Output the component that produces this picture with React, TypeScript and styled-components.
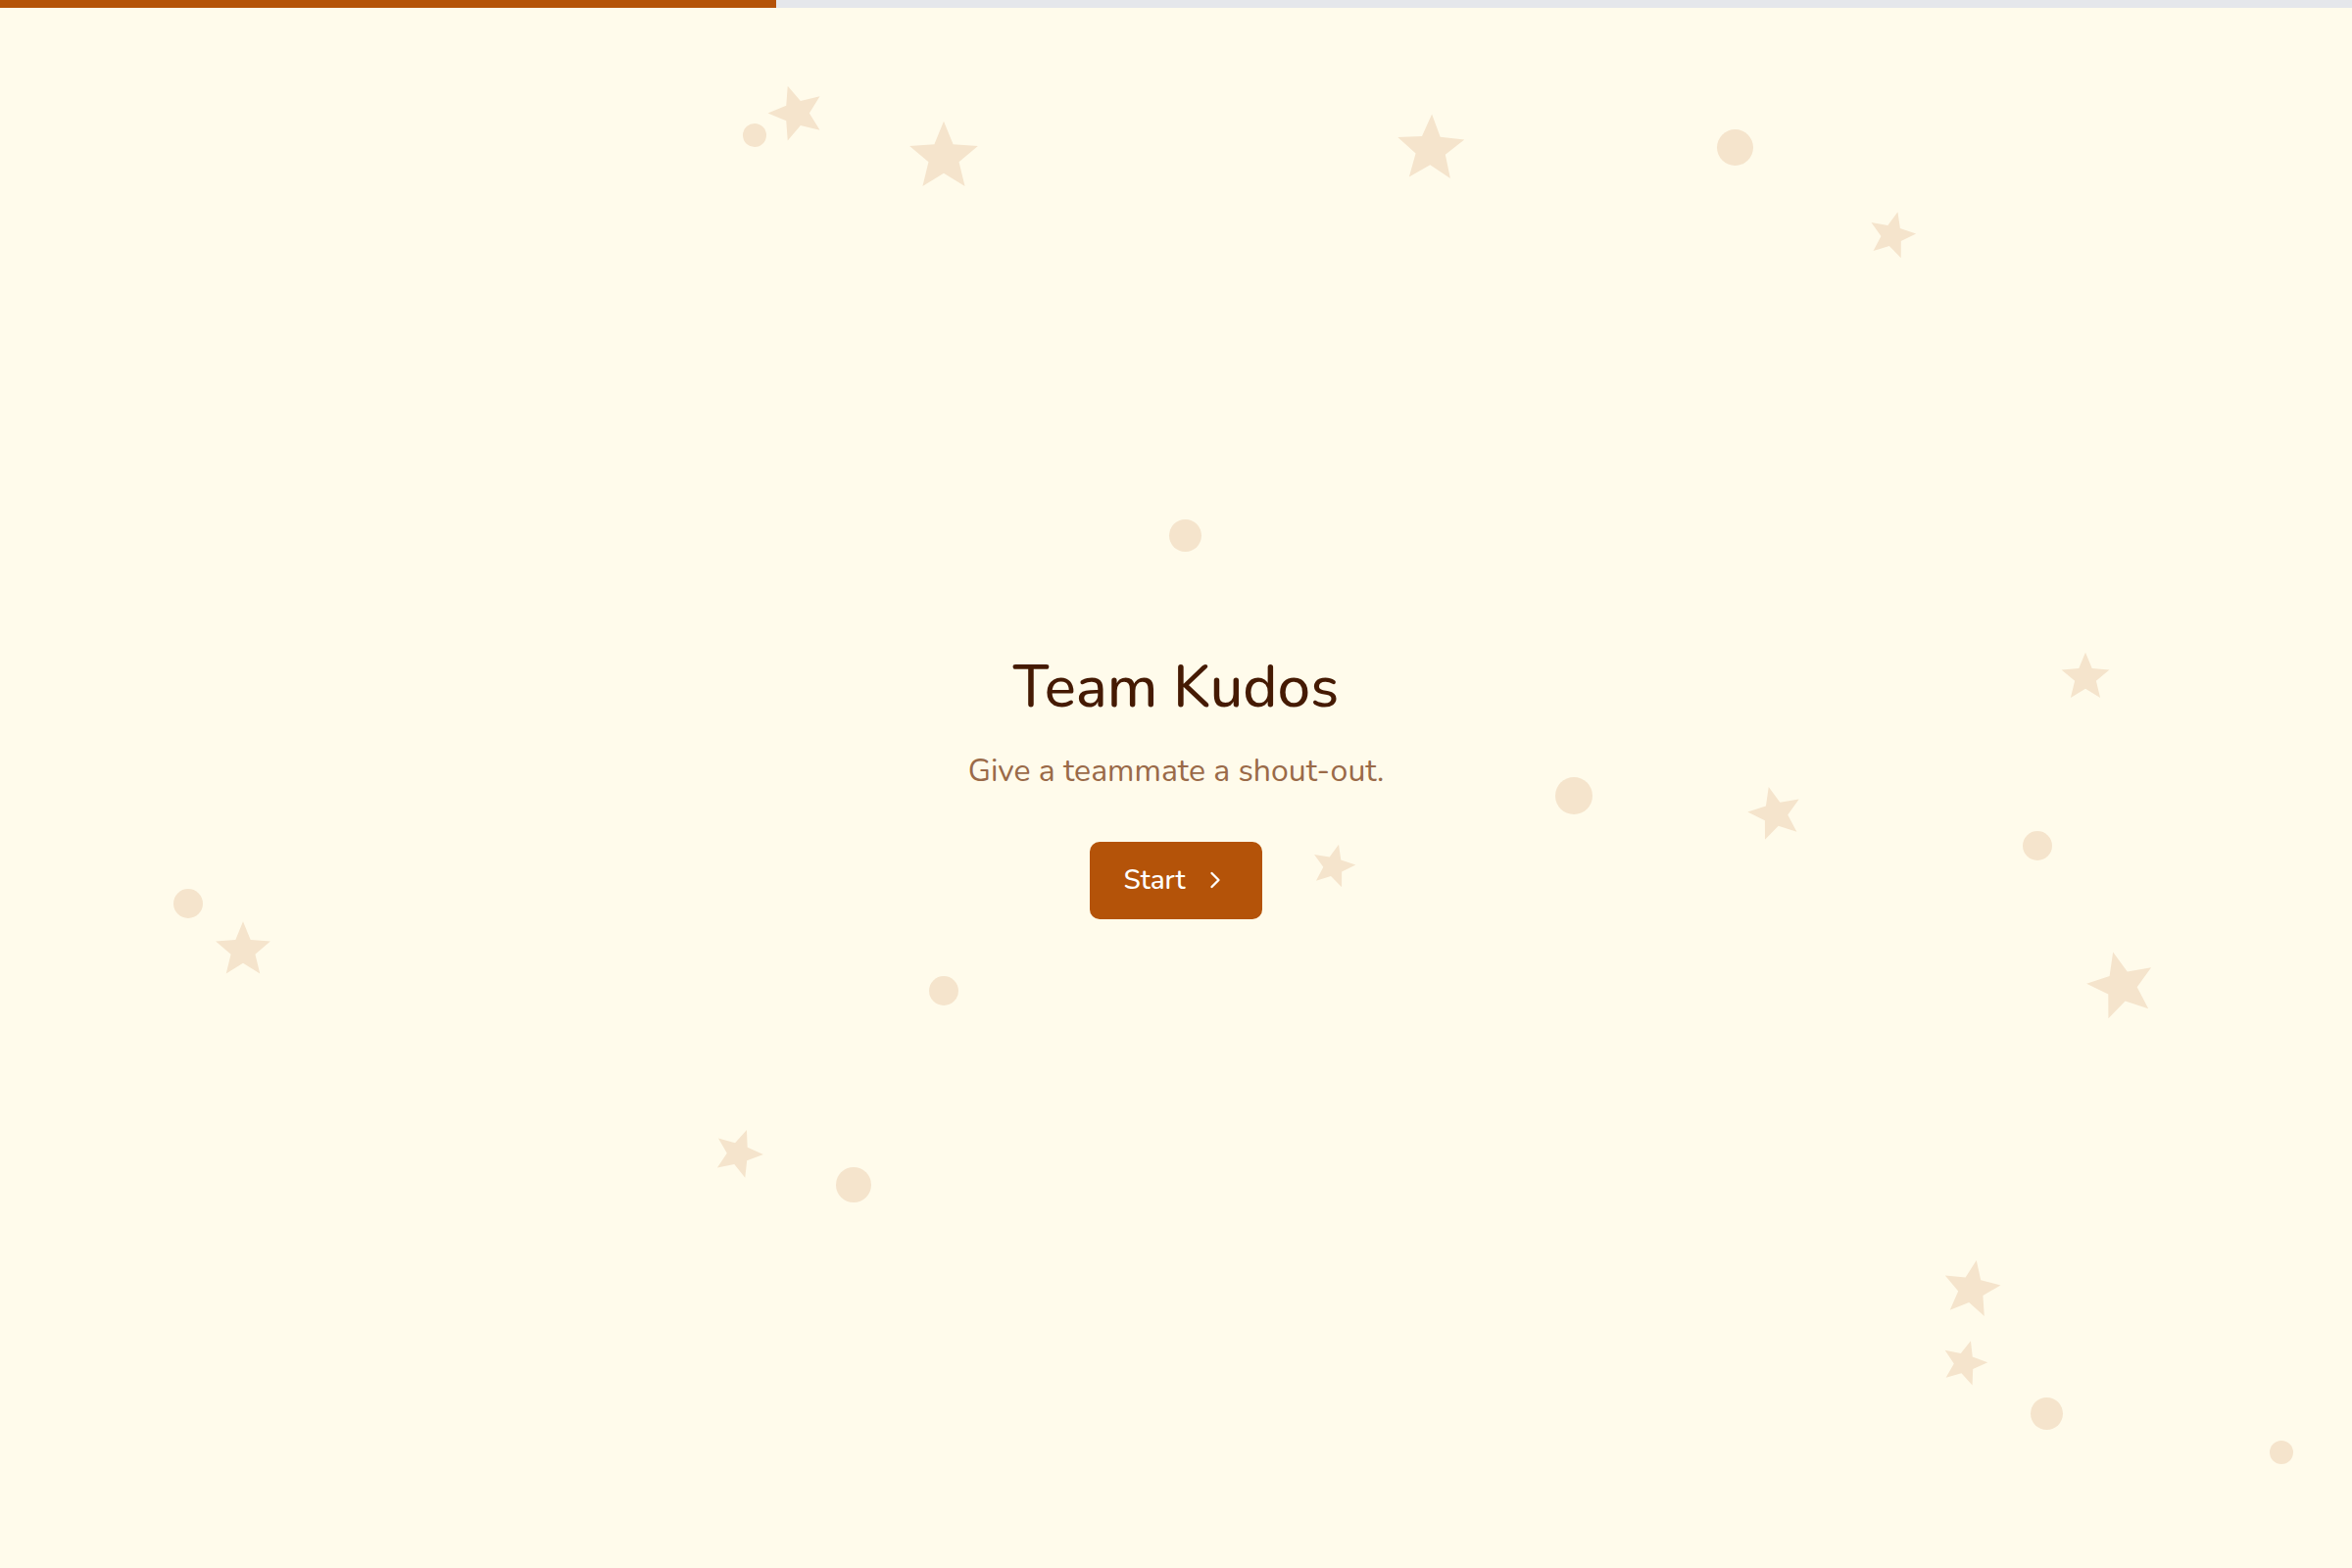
import React from "react";
import styled, { createGlobalStyle } from "styled-components";
import { ChevronRight } from "lucide-react";

const Global = createGlobalStyle`
  html, body { margin: 0; padding: 0; }
  body {
    background: #fffbeb;
    font-family: "Nunito", "Lato", "Noto Sans", sans-serif;
  }
`;

const Page = styled.div`
  position: relative;
  width: 100%;
  height: 1600px;
  overflow: hidden;
  background: #fffbeb;
  display: flex;
  flex-direction: column;
`;

const Progress = styled.div`
  height: 8px;
  width: 100%;
  background: #e5e7eb;
  flex-shrink: 0;
`;

const ProgressFill = styled.div`
  height: 100%;
  background: #b45309;
`;

const Decor = styled.div`
  position: absolute;
  inset: 0;
  pointer-events: none;
`;

const Dot = styled.div<{ $x: number; $y: number; $d: number }>`
  position: absolute;
  left: ${(p) => p.$x - p.$d / 2}px;
  top: ${(p) => p.$y - p.$d / 2}px;
  width: ${(p) => p.$d}px;
  height: ${(p) => p.$d}px;
  border-radius: 50%;
  background: #f5e4cc;
`;

const StarSvg = styled.svg<{ $x: number; $y: number; $s: number; $r: number }>`
  position: absolute;
  left: ${(p) => p.$x - p.$s / 2}px;
  top: ${(p) => p.$y - p.$s / 2}px;
  width: ${(p) => p.$s}px;
  height: ${(p) => p.$s}px;
  transform: rotate(${(p) => p.$r}deg);
  fill: #f5e4cc;
`;

const Center = styled.main`
  position: relative;
  flex: 1;
  display: flex;
  flex-direction: column;
  align-items: center;
  justify-content: center;
  padding-bottom: 6px;
`;

const Title = styled.h1`
  margin: 0;
  font-size: 60px;
  line-height: 72px;
  font-weight: 500;
  color: #451a03;
  letter-spacing: 0;
`;

const Subtitle = styled.p`
  margin: 29px 0 0;
  font-size: 32px;
  line-height: 42px;
  font-weight: 400;
  color: #9a6a48;
`;

const StartButton = styled.button`
  margin-top: 51px;
  display: flex;
  align-items: center;
  gap: 16px;
  height: 79px;
  padding: 0 34px;
  border: none;
  border-radius: 10px;
  background: #b45309;
  color: #ffffff;
  font-family: inherit;
  font-size: 28px;
  font-weight: 500;
  cursor: pointer;
`;

const dots = [
  { x: 770, y: 138, d: 24 },
  { x: 1770, y: 150, d: 37 },
  { x: 1209, y: 546, d: 33 },
  { x: 1606, y: 812, d: 38 },
  { x: 2079, y: 863, d: 30 },
  { x: 192, y: 922, d: 30 },
  { x: 963, y: 1011, d: 30 },
  { x: 871, y: 1209, d: 36 },
  { x: 2088, y: 1442, d: 33 },
  { x: 2328, y: 1482, d: 24 },
];

const stars = [
  { x: 812, y: 113, s: 64, r: -18 },
  { x: 963, y: 157, s: 80, r: 0 },
  { x: 1460, y: 149, s: 78, r: 2 },
  { x: 1931, y: 238, s: 54, r: 14 },
  { x: 2128, y: 689, s: 56, r: 0 },
  { x: 1811, y: 828, s: 62, r: -14 },
  { x: 1361, y: 882, s: 50, r: 14 },
  { x: 248, y: 967, s: 64, r: 0 },
  { x: 2164, y: 1003, s: 78, r: -14 },
  { x: 754, y: 1175, s: 56, r: 20 },
  { x: 2012, y: 1313, s: 66, r: 10 },
  { x: 2005, y: 1389, s: 52, r: 16 },
];

const starPoints = (() => {
  const pts: string[] = [];
  for (let i = 0; i < 10; i++) {
    const r = i % 2 === 0 ? 11 : 4.9;
    const a = -Math.PI / 2 + (i * Math.PI) / 5;
    pts.push(`${(12 + r * Math.cos(a)).toFixed(2)},${(13 + r * Math.sin(a)).toFixed(2)}`);
  }
  return pts.join(" ");
})();

const Star = ({ x, y, s, r }: { x: number; y: number; s: number; r: number }) => (
  <StarSvg $x={x} $y={y} $s={s} $r={r} viewBox="0 0 24 24">
    <polygon points={starPoints} />
  </StarSvg>
);

export default function App() {
  return (
    <>
      <Global />
      <Page>
        <Progress>
          <ProgressFill style={{ width: "33%" }} />
        </Progress>
        <Decor>
          {dots.map((d, i) => (
            <Dot key={i} $x={d.x} $y={d.y} $d={d.d} />
          ))}
          {stars.map((s, i) => (
            <Star key={i} {...s} />
          ))}
        </Decor>
        <Center>
          <Title>Team Kudos</Title>
          <Subtitle>Give a teammate a shout-out.</Subtitle>
          <StartButton>
            Start
            <ChevronRight size={28} strokeWidth={2} />
          </StartButton>
        </Center>
      </Page>
    </>
  );
}
